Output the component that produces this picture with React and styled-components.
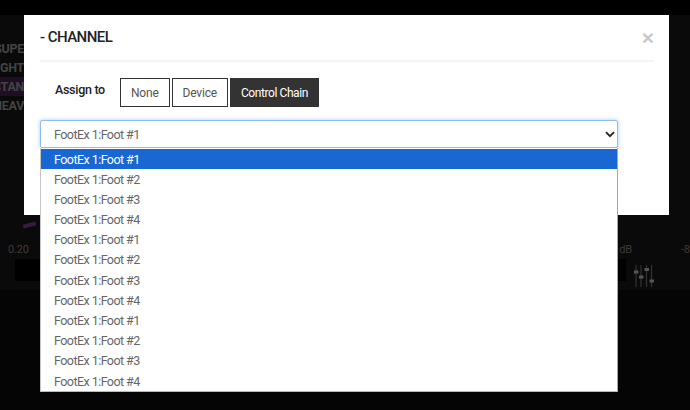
import React from "react";
import styled, { createGlobalStyle } from "styled-components";

const ports = ["#1", "#2", "#3", "#4"];
const options = [...ports, ...ports, ...ports].map((p) => `FootEx 1:Foot ${p}`);
const presets = [
  { name: "SUPE" },
  { name: "LIGHT" },
  { name: "STAN", active: true },
  { name: "HEAV" },
];

const Global = createGlobalStyle`
  html, body {
    margin: 0;
    padding: 0;
    width: 690px;
    height: 410px;
    overflow: hidden;
    background: #0a0a0a;
  }
`;

const App = () => {
  return (
    <Page>
      <Global />
      <Backdrop>
        <TopBar />
        <PresetList>
          {presets.map((p) => (
            <Preset key={p.name} $active={p.active}>{p.name}</Preset>
          ))}
        </PresetList>
        <MeterRow>
          <LeftMeter>
            <PinkMark />
            <MeterValue>0.20</MeterValue>
            <MeterBlock />
          </LeftMeter>
          <RightMeter>
            <DbRow>
              <DbClip><MeterValue>3 dB</MeterValue></DbClip>
              <DbFar>-8</DbFar>
            </DbRow>
            <FaderRow>
              <EdgeBlock />
              <svg width="22" height="22" viewBox="0 0 22 22">
                <path d="M3 0v22M8 0v22M13.5 0v22M18.5 0v22" stroke="#333" strokeWidth="1.2" />
                <g fill="#555">
                  <rect x="1" y="5.5" width="4.5" height="3" />
                  <rect x="6" y="10.5" width="4.5" height="3" />
                  <rect x="11.5" y="3" width="4.5" height="3" />
                  <rect x="16.5" y="14.5" width="4.5" height="3" />
                </g>
              </svg>
            </FaderRow>
          </RightMeter>
        </MeterRow>
      </Backdrop>
      <Modal>
        <Header>
          <Title>- CHANNEL</Title>
          <Close>×</Close>
        </Header>
        <AssignRow>
          <AssignLabel>Assign to</AssignLabel>
          <Choices>
            <Choice>None</Choice>
            <Choice>Device</Choice>
            <Choice $selected>Control Chain</Choice>
          </Choices>
        </AssignRow>
        <SelectWrap>
          <SelectBox>
            <span>FootEx 1:Foot #1</span>
            <svg width="10" height="7" viewBox="0 0 10 7">
              <path d="M1 1.2l4 4 4-4" fill="none" stroke="#222" strokeWidth="1.8" />
            </svg>
          </SelectBox>
          <OptionList>
            {options.map((o, i) => (
              <Option key={i} $highlighted={i === 0}>{o}</Option>
            ))}
          </OptionList>
        </SelectWrap>
      </Modal>
    </Page>
  );
};

const Page = styled.div`
  position: relative;
  width: 690px;
  height: 410px;
  padding: 15px 21px 0 24px;
  box-sizing: border-box;
  background: #0a0a0a;
  font-family: "Roboto", "Liberation Sans", sans-serif;
  overflow: hidden;
`;

const Backdrop = styled.div`
  position: absolute;
  inset: 0;
  display: flex;
  flex-direction: column;
  background: linear-gradient(#0a0a0a 0, #0a0a0a 290px, #050505 290px);
`;

const TopBar = styled.div`
  height: 15px;
  background: #000;
`;

const PresetList = styled.div`
  width: 24px;
  margin-top: 24px;
  display: flex;
  flex-direction: column;
  overflow: hidden;
`;

const Preset = styled.div`
  height: 19px;
  display: flex;
  justify-content: flex-end;
  line-height: 19px;
  font-size: 12.5px;
  font-weight: 700;
  letter-spacing: -0.3px;
  color: #434343;
  white-space: nowrap;
  background: ${(p) => (p.$active ? "#1e0f24" : "transparent")};
`;

const MeterRow = styled.div`
  display: flex;
  margin-top: 108px;
`;

const LeftMeter = styled.div`
  width: 618px;
  box-sizing: border-box;
  padding-left: 8px;
`;

const PinkMark = styled.div`
  width: 13px;
  height: 4px;
  margin: 0 0 14px 15px;
  background: #3a1a44;
  transform: rotate(-14deg);
`;

const MeterValue = styled.div`
  flex: none;
  height: 18px;
  line-height: 17px;
  font-size: 11px;
  letter-spacing: -0.2px;
  white-space: nowrap;
  color: #3c3c3c;
`;

const MeterBlock = styled.div`
  width: 25px;
  height: 22px;
  margin-left: 7px;
  background: #000;
`;

const RightMeter = styled.div`
  padding-top: 18px;
`;

const DbRow = styled.div`
  display: flex;
`;

const DbClip = styled.div`
  width: 14px;
  display: flex;
  justify-content: flex-end;
  overflow: hidden;
`;

const DbFar = styled(MeterValue)`
  margin-left: 49px;
`;

const FaderRow = styled.div`
  display: flex;
  align-items: flex-start;
  gap: 7px;
  svg {
    margin-top: 6px;
  }
`;

const EdgeBlock = styled.div`
  width: 8px;
  height: 22px;
  background: #000;
`;

const Modal = styled.div`
  position: relative;
  height: 200px;
  box-sizing: border-box;
  padding: 0 15px 0 16px;
  background: #fff;
`;

const Header = styled.div`
  height: 47px;
  box-sizing: border-box;
  display: flex;
  align-items: center;
  justify-content: space-between;
  border-bottom: 2px solid #f4f4f4;
`;

const Title = styled.h4`
  margin: 0 0 1px;
  font-size: 15px;
  font-weight: 500;
  letter-spacing: -0.55px;
  color: #222;
`;

const Close = styled.span`
  font-size: 21px;
  font-weight: 700;
  line-height: 1;
  color: #c8c8c8;
  font-family: "Liberation Sans", sans-serif;
`;

const AssignRow = styled.div`
  display: flex;
  align-items: flex-start;
  margin-top: 16px;
  padding-left: 15px;
`;

const AssignLabel = styled.div`
  width: 65px;
  margin-top: 3px;
  font-size: 12.5px;
  font-weight: 500;
  letter-spacing: -0.3px;
  line-height: 18px;
  color: #222;
`;

const Choices = styled.div`
  display: flex;
  gap: 2px;
`;

const Choice = styled.div`
  height: 29px;
  box-sizing: border-box;
  padding: 0 10px;
  display: flex;
  align-items: center;
  font-size: 12px;
  letter-spacing: ${(p) => (p.$selected ? "-0.42px" : "-0.2px")};
  color: ${(p) => (p.$selected ? "#fff" : "#555")};
  background: ${(p) => (p.$selected ? "#333" : "#fff")};
  border: 1px solid #333;
`;

const SelectWrap = styled.div`
  position: relative;
  width: 578px;
  margin-top: 13px;
`;

const SelectBox = styled.div`
  height: 28px;
  box-sizing: border-box;
  padding: 0 2px 0 13px;
  display: flex;
  align-items: center;
  justify-content: space-between;
  font-size: 12.5px;
  letter-spacing: -0.55px;
  color: #666;
  background: #fff;
  border: 1px solid #8fbcec;
  border-radius: 2px;
  box-shadow: 0 0 4px rgba(102, 175, 233, 0.6);
`;

const OptionList = styled.div`
  position: absolute;
  left: 0;
  right: 0;
  top: 100%;
  box-sizing: border-box;
  padding-top: 0.5px;
  background: #fff;
  border-right: 1px solid #a8a8a8;
  border-left: 1px solid #c4c4c4;
  border-bottom: 1px solid #bbb;
`;

const Option = styled.div`
  height: 20.2px;
  line-height: 21.5px;
  padding-left: 13px;
  font-size: 12.5px;
  letter-spacing: -0.55px;
  color: ${(p) => (p.$highlighted ? "#fff" : "#666")};
  background: ${(p) => (p.$highlighted ? "#1967d2" : "#fff")};
`;

export default App;
